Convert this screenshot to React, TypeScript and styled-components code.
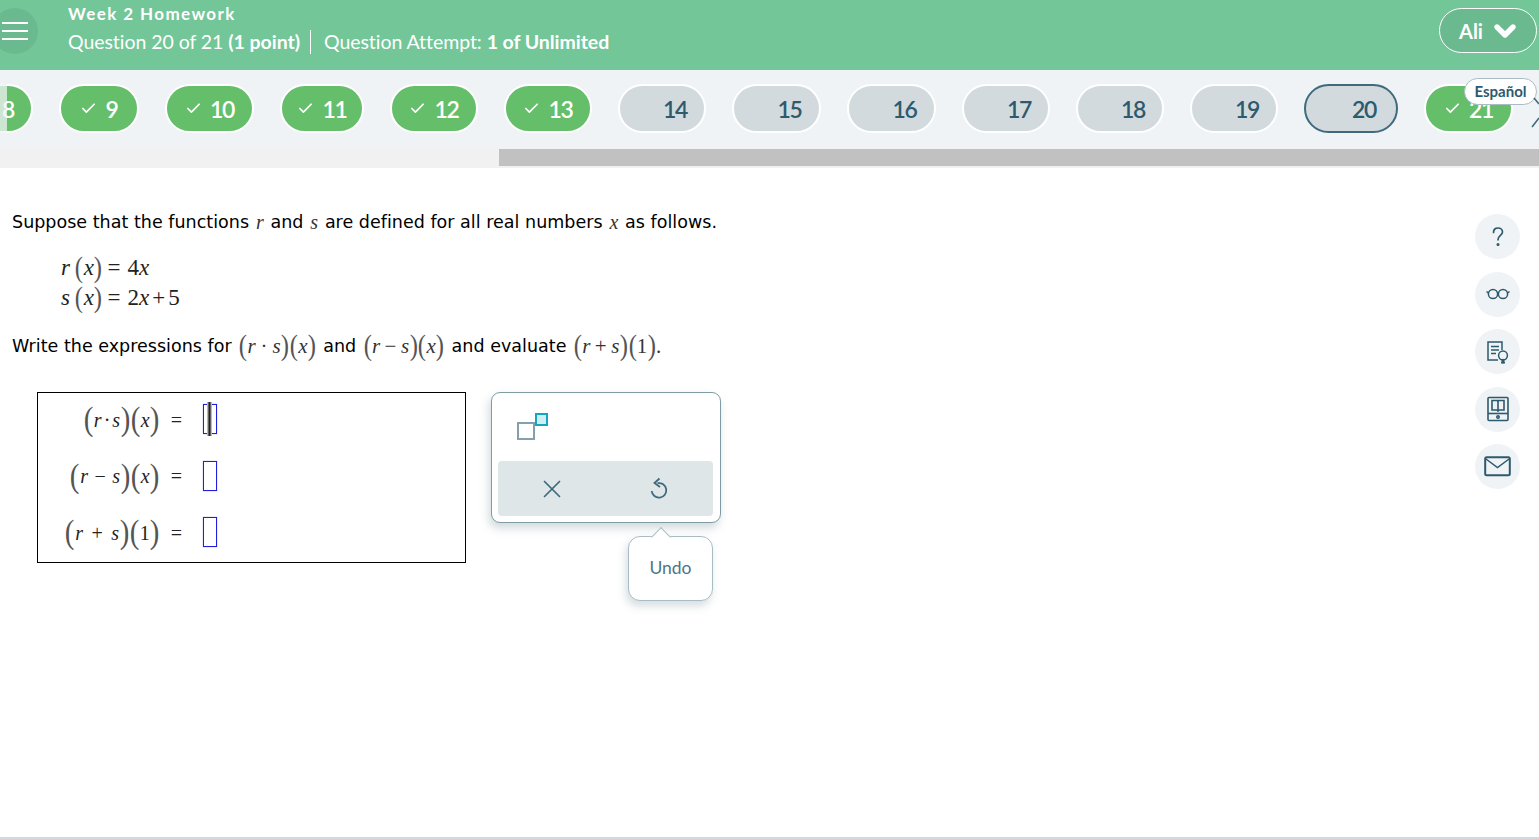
import React from "react";
import styled, { createGlobalStyle } from "styled-components";
import { Check, ChevronDown, X } from "lucide-react";

const Global = createGlobalStyle`
  html, body { margin: 0; padding: 0; background: #fff; overflow: hidden; }
  * { box-sizing: border-box; }
`;

const Page = styled.div`
  width: 1539px; height: 839px; position: relative; overflow: hidden;
  border-bottom: 2px solid #d2dade;
  font-family: "DejaVu Sans", sans-serif;
`;

const Header = styled.header`
  height: 70px; background: #73c698; color: #fff; display: flex; align-items: flex-start;
  font-family: Lato, sans-serif;
  position: relative;
`;
const MenuCircle = styled.button`
  width: 46px; height: 46px; margin: 8px 30px 0 -8px; border-radius: 50%; border: 0; padding: 0 0 0 10px;
  background: #6bba8f; display: flex; flex-direction: column; justify-content: center; gap: 6px;
  flex: none;
`;
const MenuBar = styled.span`
  display: block; width: 26px; height: 2px; background: #fff;
`;
const Titles = styled.div`
  display: flex; flex-direction: column; padding-top: 4px; flex: 1;
`;
const HomeworkTitle = styled.div`
  font-size: 17px; font-weight: 700; letter-spacing: 1.4px; line-height: 20px;
`;
const SubLine = styled.div`
  display: flex; align-items: center; font-size: 19.5px; line-height: 26px; margin-top: 5px; letter-spacing: -.05px;
  b { font-weight: 700; }
`;
const Divider = styled.span`
  width: 1px; height: 24px; background: #fff; margin: 0 13px 0 10px;
`;
const UserButton = styled.button`
  width: 98px; height: 45px; margin: 8px 2px 0 0; border: 1px solid #fff; border-radius: 23px;
  background: #6bba8f; color: #fff; font: 700 20px Lato, sans-serif;
  display: flex; align-items: center; justify-content: center; gap: 6px; padding: 0 0 0 4px;
`;

const NavStrip = styled.nav`
  height: 79px; background: #eff3f5; position: relative; overflow: hidden;
`;
const PillTrack = styled.div`
  display: flex; gap: 26px; margin-left: -60px; padding-top: 14px; width: 1700px;
  font-family: Lato, sans-serif;
`;
const Pill = styled.div<{ $w: number; $state: "done" | "todo" | "current"; $shift?: number }>`
  width: ${(p) => p.$w}px; height: 49px; flex: none; border-radius: 25px;
  border: 2px solid ${(p) => (p.$state === "current" ? "#3f6a7d" : "#fff")};
  background: ${(p) => (p.$state === "done" ? "#65bf6a" : "#d2dade")};
  color: ${(p) => (p.$state === "done" ? "#fff" : "#2e5a6e")};
  font-size: 23px; font-weight: 600; letter-spacing: -1.3px;
  display: flex; align-items: center; justify-content: center; gap: 8px;
  padding-left: ${(p) => p.$shift ?? (p.$state === "done" ? 0 : 26)}px;
`;
const LeftFade = styled.div`
  position: absolute; left: 0; top: 14px; width: 7px; height: 49px; background: rgba(239, 243, 245, .75);
`;
const EspanolTag = styled.div`
  position: absolute; top: 8px; right: 2px; width: 73px; height: 27px; border-radius: 14px;
  background: #fff; border: 1px solid #a9bcc5; color: #2e5a6e; padding-bottom: 1px;
  font: 700 15px Lato, sans-serif; display: flex; align-items: center; justify-content: center;
`;
const NextArrow = styled.svg`
  position: absolute; right: 0; top: 26px;
`;
const ScrollTrack = styled.div`
  height: 19px; background: #f1f1f1; padding-left: 499px;
`;
const ScrollThumb = styled.div`
  height: 17px; background: #c1c1c1;
`;

const Main = styled.main`
  display: flex; justify-content: space-between; padding: 0 19px 0 12px;
`;
const Content = styled.div`
  padding-top: 43px; color: #000; font-size: 17.5px;
`;
const Para = styled.p`
  margin: 0; line-height: 22px; height: 22px; letter-spacing: .02px; white-space: nowrap; display: flex; align-items: center;
`;
const MathVar = styled.i`
  font-family: "Liberation Serif", serif; font-size: 20px; color: #333; margin: 0 6.8px;
`;
const Defs = styled.div`
  margin: 20px 0 22px 49px; font-family: "Liberation Serif", serif; font-size: 23px; line-height: 30px; color: #222;
`;
const MathLine = styled.div`
  display: flex; align-items: center; height: 30px;
  i { font-style: italic; }
`;
const BigParen = styled.span<{ $size?: number }>`
  font-family: "Liberation Serif", serif; font-weight: 400; font-size: ${(p) => p.$size ?? 29}px; color: #555;
  line-height: 1; transform: scaleX(.85); display: inline-block; position: relative; top: -1px; margin: 0 -.5px;
`;
const InlineMath = styled.span`
  font-family: "Liberation Serif", serif; font-size: 21px; color: #333; display: inline-flex; align-items: center;
  margin: 0 7px;
  i { font-style: italic; }
`;
const Gap = styled.span<{ $w: number }>`
  display: inline-block; width: ${(p) => p.$w}px;
`;

const AnswerRow = styled.div`
  display: flex; align-items: flex-start; gap: 25px; margin-top: 35px; margin-left: 25px;
`;
const AnswerBox = styled.div`
  width: 429px; height: 171px; border: 1px solid #000;
`;
const AnswerLine = styled.div`
  height: 56.5px; display: flex; align-items: center; font-family: "Liberation Serif", serif; font-size: 20px; color: #222;
  i { font-style: italic; }
  &:first-child { margin-top: -2px; }
`;
const Expr = styled.div`
  width: 122px; padding-top: 2px; display: flex; justify-content: flex-end; align-items: center;
`;
const Equals = styled.span`
  width: 33px; padding-top: 2px; margin-right: 10px; text-align: center; font-size: 20px;
`;
const Blank = styled.span<{ $active?: boolean }>`
  width: 14px; height: 30px; border: 1.5px solid #1f1fe0; box-shadow: 0 0 1px #8a8af0; position: relative; display: block;
  ${(p) => p.$active && `
    &::after { content: ""; position: absolute; left: 3px; top: -3px; bottom: -3px; width: 5px;
      background: linear-gradient(90deg, #e4e4e4, #222 45%, #222 55%, #e4e4e4); }
  `}
`;
const Palette = styled.div`
  width: 230px; height: 131px; border: 1px solid #7f9ca5; border-radius: 9px; background: #fff;
  box-shadow: -2px 5px 10px rgba(90,120,130,.28); padding: 6px 7px 6px 6px; display: flex; flex-direction: column; position: relative;
`;
const PaletteTop = styled.div`
  height: 62px; position: relative;
`;
const SquareBase = styled.span`
  position: absolute; left: 19px; top: 23px; width: 18px; height: 18px; border: 2px solid #84a0aa; background: #fff;
`;
const SquareSup = styled.span`
  position: absolute; left: 37px; top: 14px; width: 13px; height: 13px; border: 2px solid #14a5bf; background: #cdeef3;
`;
const PaletteActions = styled.div`
  height: 55px; background: #dfe6e8; border-radius: 4px; display: flex; color: #3f6a7d;
`;
const ActionCell = styled.div`
  flex: 1; display: flex; align-items: center; justify-content: center;
`;
const Tooltip = styled.div`
  position: absolute; left: 136px; top: 143px; width: 85px; height: 65px; background: #fff; padding-bottom: 2px;
  border: 1px solid #a9bcc5; border-radius: 12px; box-shadow: -2px 5px 9px rgba(90,120,130,.25);
  color: #4d7688; font: 400 17.5px Lato, sans-serif; display: flex; align-items: center; justify-content: center;
  &::before { content: ""; position: absolute; left: 25px; top: -7px; width: 13px; height: 13px;
    background: #fff; border-left: 1px solid #a9bcc5; border-top: 1px solid #a9bcc5; transform: rotate(45deg); }
`;

const ToolRail = styled.aside`
  display: flex; flex-direction: column; gap: 12.5px; padding-top: 46px;
`;
const ToolButton = styled.div`
  width: 45px; height: 45px; border-radius: 50%; background: #eff3f5; color: #2e5a6e;
  display: flex; align-items: center; justify-content: center;
`;

const pills: [string, number, "done" | "todo" | "current", number?][] = [
  ["8", 93, "done", 18], ["9", 80, "done"], ["10", 89, "done"], ["11", 84, "done"], ["12", 88, "done"], ["13", 88, "done"],
  ["14", 88, "todo"], ["15", 89, "todo"], ["16", 89, "todo"], ["17", 88, "todo"], ["18", 88, "todo"], ["19", 88, "todo"],
  ["20", 94, "current"], ["21", 89, "done"],
];

const Paren = ({ c, size }: { c: string; size?: number }) => <BigParen $size={size}>{c}</BigParen>;

export default function App() {
  return (
    <Page>
      <Global />
      <Header>
        <MenuCircle aria-label="menu"><MenuBar /><MenuBar /><MenuBar /></MenuCircle>
        <Titles>
          <HomeworkTitle>Week 2 Homework</HomeworkTitle>
          <SubLine>
            <span>Question 20 of 21&nbsp;<b>(1 point)</b></span>
            <Divider />
            <span>Question Attempt:&nbsp;<b>1 of Unlimited</b></span>
          </SubLine>
        </Titles>
        <UserButton>Ali <ChevronDown size={32} strokeWidth={4} /></UserButton>
      </Header>
      <NavStrip>
        <PillTrack>
          {pills.map(([n, w, s, shift]) => (
            <Pill key={n} $w={w} $state={s} $shift={shift}>
              {s === "done" && <Check size={17} strokeWidth={2.4} />}
              {n}
            </Pill>
          ))}
        </PillTrack>
        <LeftFade />
        <EspanolTag>Español</EspanolTag>
        <NextArrow width="10" height="34" viewBox="0 0 10 34" fill="none" stroke="#3f6a7d" strokeWidth="1.6">
          <path d="M5 2 L10 8 M3 31 L10 22" />
        </NextArrow>
      </NavStrip>
      <ScrollTrack><ScrollThumb /></ScrollTrack>
      <Main>
        <Content>
          <Para>Suppose that the functions<MathVar>r</MathVar>and<MathVar>s</MathVar>are defined for all real numbers<MathVar>x</MathVar>as follows.</Para>
          <Defs>
            <MathLine><i>r</i><Gap $w={5} /><Paren c="(" /><i>x</i><Paren c=")" /><Gap $w={5} />=<Gap $w={7} />4<i>x</i></MathLine>
            <MathLine><i>s</i><Gap $w={5} /><Paren c="(" /><i>x</i><Paren c=")" /><Gap $w={5} />=<Gap $w={7} />2<i>x</i><Gap $w={3} />+<Gap $w={3} />5</MathLine>
          </Defs>
          <Para>
            Write the expressions for
            <InlineMath><Paren c="(" /><i>r</i><Gap $w={5} />·<Gap $w={5} /><i>s</i><Paren c=")" /><Paren c="(" /><i>x</i><Paren c=")" /></InlineMath>
            and
            <InlineMath><Paren c="(" /><i>r</i><Gap $w={4.5} />−<Gap $w={4.5} /><i>s</i><Paren c=")" /><Paren c="(" /><i>x</i><Paren c=")" /></InlineMath>
            and evaluate
            <InlineMath><Paren c="(" /><i>r</i><Gap $w={4.5} />+<Gap $w={4.5} /><i>s</i><Paren c=")" /><Paren c="(" />1<Paren c=")" />.</InlineMath>
          </Para>
          <AnswerRow>
            <AnswerBox>
              <AnswerLine>
                <Expr><Paren c="(" size={34} /><i>r</i><Gap $w={2} />·<Gap $w={2} /><i>s</i><Paren c=")" size={34} /><Paren c="(" size={34} /><i>x</i><Paren c=")" size={34} /></Expr>
                <Equals>=</Equals><Blank $active />
              </AnswerLine>
              <AnswerLine>
                <Expr><Paren c="(" size={34} /><i>r</i><Gap $w={6.5} />−<Gap $w={6.5} /><i>s</i><Paren c=")" size={34} /><Paren c="(" size={34} /><i>x</i><Paren c=")" size={34} /></Expr>
                <Equals>=</Equals><Blank />
              </AnswerLine>
              <AnswerLine>
                <Expr><Paren c="(" size={34} /><i>r</i><Gap $w={8.5} />+<Gap $w={8.5} /><i>s</i><Paren c=")" size={34} /><Paren c="(" size={34} />1<Paren c=")" size={34} /></Expr>
                <Equals>=</Equals><Blank />
              </AnswerLine>
            </AnswerBox>
            <Palette>
              <PaletteTop><SquareBase /><SquareSup /></PaletteTop>
              <PaletteActions>
                <ActionCell><X size={30} strokeWidth={1.4} /></ActionCell>
                <ActionCell>
                  <svg width="24" height="26" viewBox="0 0 24 26" fill="none" stroke="currentColor" strokeWidth="1.8">
                    <path d="M10.5 7.2 A7.3 7.3 0 1 1 4.7 15" />
                    <path d="M12.5 2.5 L7.5 7 L13 11" />
                  </svg>
                </ActionCell>
              </PaletteActions>
              <Tooltip>Undo</Tooltip>
            </Palette>
          </AnswerRow>
        </Content>
        <ToolRail>
          <ToolButton>
            <svg width="26" height="26" viewBox="0 0 26 26" fill="none" stroke="currentColor" strokeWidth="1.7" strokeLinecap="round"><path d="M8.5 8.5 C8.5 5.5 10.5 4 13 4 C15.5 4 17.5 5.6 17.5 8 C17.5 11.5 13 11.5 13 15.8" /><circle cx="13" cy="20.5" r=".7" /></svg>
          </ToolButton>
          <ToolButton>
            <svg width="26" height="16" viewBox="0 0 26 16" fill="none" stroke="currentColor" strokeWidth="1.5"><circle cx="8" cy="8" r="4.6" /><circle cx="18" cy="8" r="4.6" /><path d="M12.4 7 Q13 6.4 13.6 7 M3.4 7 L1.5 5.5 M22.6 7 L24.5 5.5" /></svg>
          </ToolButton>
          <ToolButton>
            <svg width="26" height="26" viewBox="0 0 26 26" fill="none" stroke="currentColor" strokeWidth="1.5"><path d="M17 11 V3 H3 V21 H13" /><path d="M6 7.5 H14 M6 11 H14 M6 14.5 H11" /><circle cx="18" cy="16.5" r="4.4" /><path d="M16 23.5 H20" strokeWidth="2" /><path d="M17 20 L18 23 L19 20" fill="currentColor" /></svg>
          </ToolButton>
          <ToolButton>
            <svg width="24" height="26" viewBox="0 0 24 26" fill="none" stroke="currentColor" strokeWidth="1.6"><rect x="2" y="1.5" width="20" height="23" rx="1" /><path d="M6 4.5 H11.5 L12 5 L12.5 4.5 H18 V14 H13 L12 15 L11 14 H6 Z" /><path d="M12 5 V15" /><path d="M2 17.5 H22" /><circle cx="12" cy="21" r="1.2" /></svg>
          </ToolButton>
          <ToolButton>
            <svg width="27" height="21" viewBox="0 0 27 21" fill="none" stroke="currentColor" strokeWidth="2"><rect x="1.2" y="1.2" width="24.6" height="18" rx="1.5" /><path d="M2 3 L13.5 11.5 L25 3" strokeWidth="1.5" /></svg>
          </ToolButton>
        </ToolRail>
      </Main>
    </Page>
  );
}
